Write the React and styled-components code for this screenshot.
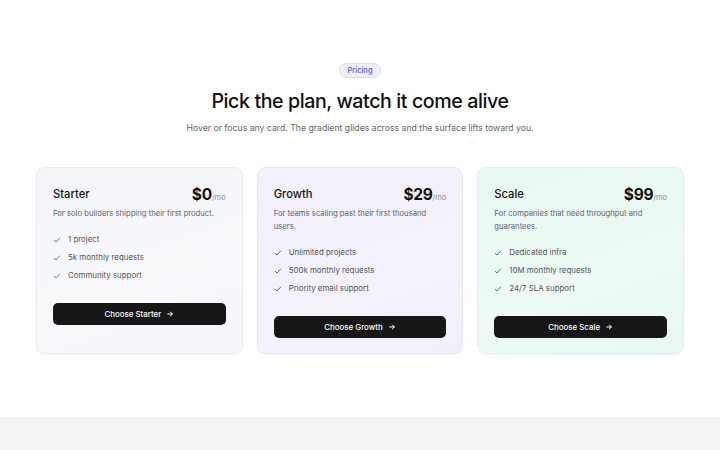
import React from "react";
import styled, { createGlobalStyle } from "styled-components";

const GlobalStyle = createGlobalStyle`
  * {
    box-sizing: border-box;
  }
  body {
    margin: 0;
    background: #f4f4f4;
    font-family: Inter, "Noto Sans", sans-serif;
    color: #141414;
    -webkit-font-smoothing: antialiased;
  }
`;

const Section = styled.section`
  background: #ffffff;
  height: 417px;
  padding-top: 63px;
  display: flex;
  flex-direction: column;
  align-items: center;
`;

const Badge = styled.span`
  display: inline-flex;
  align-items: center;
  height: 15px;
  padding: 0 7px;
  border-radius: 999px;
  background: #eeeefc;
  border: 1px solid #dcdcf6;
  color: #5b5bd6;
  font-size: 7.5px;
  font-weight: 500;
`;

const Heading = styled.h2`
  margin: 10px 0 0;
  font-size: 19.6px;
  line-height: 26px;
  font-weight: 500;
  letter-spacing: -0.4px;
  color: #111111;
`;

const Subtitle = styled.p`
  margin: 8px 0 0;
  font-size: 8.7px;
  line-height: 13px;
  color: #66666e;
`;

const Grid = styled.div`
  margin-top: 32px;
  width: 648px;
  display: grid;
  grid-template-columns: repeat(3, 1fr);
  gap: 14px;
`;

const Card = styled.div`
  border: 1px solid ${(p) => p.$border};
  border-radius: 9px;
  background: ${(p) => p.$bg};
  box-shadow: 0 1px 3px rgba(20, 20, 40, 0.05);
  padding: 16px 16px 15px;
  display: flex;
  flex-direction: column;
`;

const CardHeader = styled.div`
  display: flex;
  align-items: center;
  justify-content: space-between;
  height: 20px;
`;

const PlanName = styled.h3`
  margin: 0;
  font-size: 11.2px;
  font-weight: 500;
  color: #141414;
`;

const Price = styled.div`
  display: flex;
  align-items: baseline;
  font-size: 15.5px;
  font-weight: 700;
  letter-spacing: -0.3px;
  color: #111111;
`;

const Per = styled.span`
  font-size: 7.5px;
  font-weight: 400;
  letter-spacing: 0;
  color: #8a8a93;
`;

const Description = styled.p`
  margin: 3px 0 0;
  font-size: 7.7px;
  line-height: 13px;
  color: #64646c;
`;

const Features = styled.ul`
  list-style: none;
  margin: 13px 0 0;
  padding: 0;
  display: flex;
  flex-direction: column;
  gap: 5px;
`;

const Feature = styled.li`
  display: flex;
  align-items: center;
  gap: 7px;
  font-size: 7.9px;
  line-height: 13px;
  color: #55555d;
`;

const Check = styled.svg`
  width: 8px;
  height: 8px;
  flex-shrink: 0;
  color: ${(p) => p.$color};
`;

const Button = styled.button`
  margin-top: 21px;
  height: 22px;
  border: none;
  border-radius: 5px;
  background: #161616;
  color: #ffffff;
  font-family: inherit;
  font-size: 7.9px;
  font-weight: 500;
  display: flex;
  align-items: center;
  justify-content: center;
  gap: 5px;
  cursor: pointer;
`;

const Arrow = styled.svg`
  width: 8px;
  height: 8px;
`;

const Footer = styled.div`
  height: 33px;
  background: #f4f4f4;
`;

const plans = [
  {
    name: "Starter",
    price: "$0",
    desc: "For solo builders shipping their first product.",
    features: ["1 project", "5k monthly requests", "Community support"],
    bg: "linear-gradient(160deg, #f5f6f9 0%, #f8f9fb 60%, #f6f7fa 100%)",
    border: "#eaebef",
    check: "#3b82f6",
  },
  {
    name: "Growth",
    price: "$29",
    desc: "For teams scaling past their first thousand users.",
    features: ["Unlimited projects", "500k monthly requests", "Priority email support"],
    bg: "linear-gradient(160deg, #f1f0fb 0%, #f4f3fc 60%, #f1f0fa 100%)",
    border: "#e8e6f6",
    check: "#8b3fd9",
  },
  {
    name: "Scale",
    price: "$99",
    desc: "For companies that need throughput and guarantees.",
    features: ["Dedicated infra", "10M monthly requests", "24/7 SLA support"],
    bg: "linear-gradient(160deg, #e8f8f1 0%, #edfaf5 60%, #e8f8f0 100%)",
    border: "#def2e8",
    check: "#1f9d6b",
  },
];

const App = () => {
  return (
    <>
      <GlobalStyle />
      <Section>
        <Badge>Pricing</Badge>
        <Heading>Pick the plan, watch it come alive</Heading>
        <Subtitle>
          Hover or focus any card. The gradient glides across and the surface lifts toward you.
        </Subtitle>
        <Grid>
          {plans.map((plan) => (
            <Card key={plan.name} $bg={plan.bg} $border={plan.border}>
              <CardHeader>
                <PlanName>{plan.name}</PlanName>
                <Price>
                  {plan.price}
                  <Per>/mo</Per>
                </Price>
              </CardHeader>
              <Description>{plan.desc}</Description>
              <Features>
                {plan.features.map((f) => (
                  <Feature key={f}>
                    <Check $color={plan.check} viewBox="0 0 24 24" fill="none" stroke="currentColor" strokeWidth="3" strokeLinecap="round" strokeLinejoin="round">
                      <path d="M4 13l5 5L20 6" />
                    </Check>
                    {f}
                  </Feature>
                ))}
              </Features>
              <Button>
                Choose {plan.name}
                <Arrow viewBox="0 0 24 24" fill="none" stroke="currentColor" strokeWidth="3" strokeLinecap="round" strokeLinejoin="round">
                  <path d="M5 12h14M13 6l6 6-6 6" />
                </Arrow>
              </Button>
            </Card>
          ))}
        </Grid>
      </Section>
      <Footer />
    </>
  );
};

export default App;
